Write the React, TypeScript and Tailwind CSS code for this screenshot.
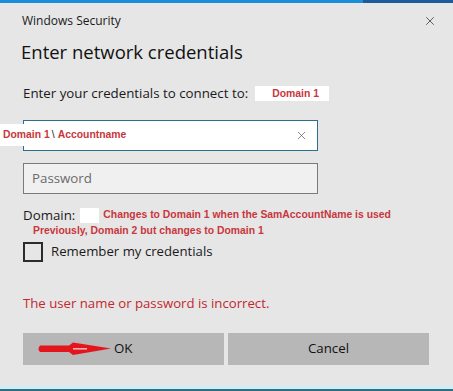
import { X } from 'lucide-react';

const UI_FONT = { fontFamily: '"Segoe UI", "Open Sans", "Noto Sans", sans-serif' };
const NOTE_FONT = { fontFamily: '"Liberation Sans", Arial, sans-serif' };

function RedArrow() {
  return (
    <svg width="76" height="16" viewBox="0 0 76 16" className="absolute left-[14px] top-[8px]">
      <path d="M3 4.5 L32 4.5 L36 1.5 L74 7.5 L36 14 L32 11 L3 11 Q0 8 3 4.5 Z" fill="#e3161e" />
      <path d="M36 7.8 L50 7.8" stroke="#f3b0b0" strokeWidth="1.6" />
    </svg>
  );
}

export default function App() {
  return (
    <div className="relative flex h-[391px] w-[453px] flex-col overflow-hidden bg-[#e6e6e6] text-[#1a1a1a]" style={UI_FONT}>
      <div className="flex h-[3px] shrink-0">
        <div className="h-full w-[363px] bg-[#1c8fdc]" />
        <div className="h-full flex-1 bg-[#1f5a9a]" />
      </div>

      <div className="flex items-center justify-between pl-[22px] pr-[16px] pt-[9px]">
        <span className="text-[12px]">Windows Security</span>
        <X size={14} strokeWidth={1.3} className="text-[#333]" />
      </div>

      <h1 className="mt-[9px] pl-[21px] text-[18.5px] leading-[26px] text-[#111]">Enter network credentials</h1>

      <div className="mt-[19px] flex items-center pl-[23px] text-[13.3px] leading-[18px]">
        <span>Enter your credentials to connect to:</span>
        <span className="ml-[7px] whitespace-nowrap bg-white pl-[17px] pr-[10px] text-[10.4px] font-bold leading-[15px] text-[#c8373d]" style={NOTE_FONT}>
          Domain 1
        </span>
      </div>

      <div className="relative mt-[18px] ml-[23px] flex h-[31px] w-[295px] items-center justify-end border border-[#2e6e8e] bg-white pr-[9px]">
        <X size={13} strokeWidth={1.3} className="text-[#555]" />
        <div className="absolute left-[-24px] top-[3px] flex h-[22px] items-center whitespace-nowrap bg-white pl-[3px] pr-[4px] text-[10.4px] font-bold text-[#c8373d]" style={NOTE_FONT}>
          Domain 1<span className="ml-[2px] font-normal text-[#222]">\</span>
          <span className="ml-[3px]">Accountname</span>
        </div>
      </div>

      <div className="mt-[12px] ml-[23px] flex h-[31px] w-[295px] items-center border border-[#7a7a7a] bg-[#f0f0f0] pl-[8px] text-[13.3px] text-[#6b6b6b]">
        Password
      </div>

      <div className="mt-[12px] flex items-center pl-[23px] text-[13.3px] leading-[18px]">
        <span>Domain:</span>
        <span className="ml-[5px] h-[15px] w-[19px] bg-white" />
        <span className="ml-[4px] whitespace-nowrap text-[10.4px] font-bold text-[#c8373d]" style={NOTE_FONT}>
          Changes to Domain 1 when the SamAccountName is used
        </span>
      </div>
      <div className="pl-[33px] text-[10.4px] font-bold leading-[14px] text-[#c8373d]" style={NOTE_FONT}>
        Previously, Domain 2 but changes to Domain 1
      </div>

      <label className="mt-[4px] flex items-center pl-[23px] text-[13.2px]">
        <span className="h-[20px] w-[20px] border-2 border-[#2b2b2b]" />
        <span className="ml-[8px]">Remember my credentials</span>
      </label>

      <p className="mt-[32px] pl-[23px] text-[13.2px] text-[#c4272f]">The user name or password is incorrect.</p>

      <div className="mt-[19px] flex gap-[4px] pl-[23px]">
        <button className="relative flex h-[32px] w-[201px] items-center bg-[#b7b7b7] pl-[91px] text-[13.3px] text-[#111]">
          <RedArrow />
          OK
        </button>
        <button className="flex h-[32px] w-[201px] items-center justify-center bg-[#b7b7b7] text-[13.3px] text-[#111]">
          Cancel
        </button>
      </div>

      <div className="mt-auto h-[4px] bg-[#d6ecf2]" />
      <div className="h-[2px] bg-[#2a6f88]" />
    </div>
  );
}
